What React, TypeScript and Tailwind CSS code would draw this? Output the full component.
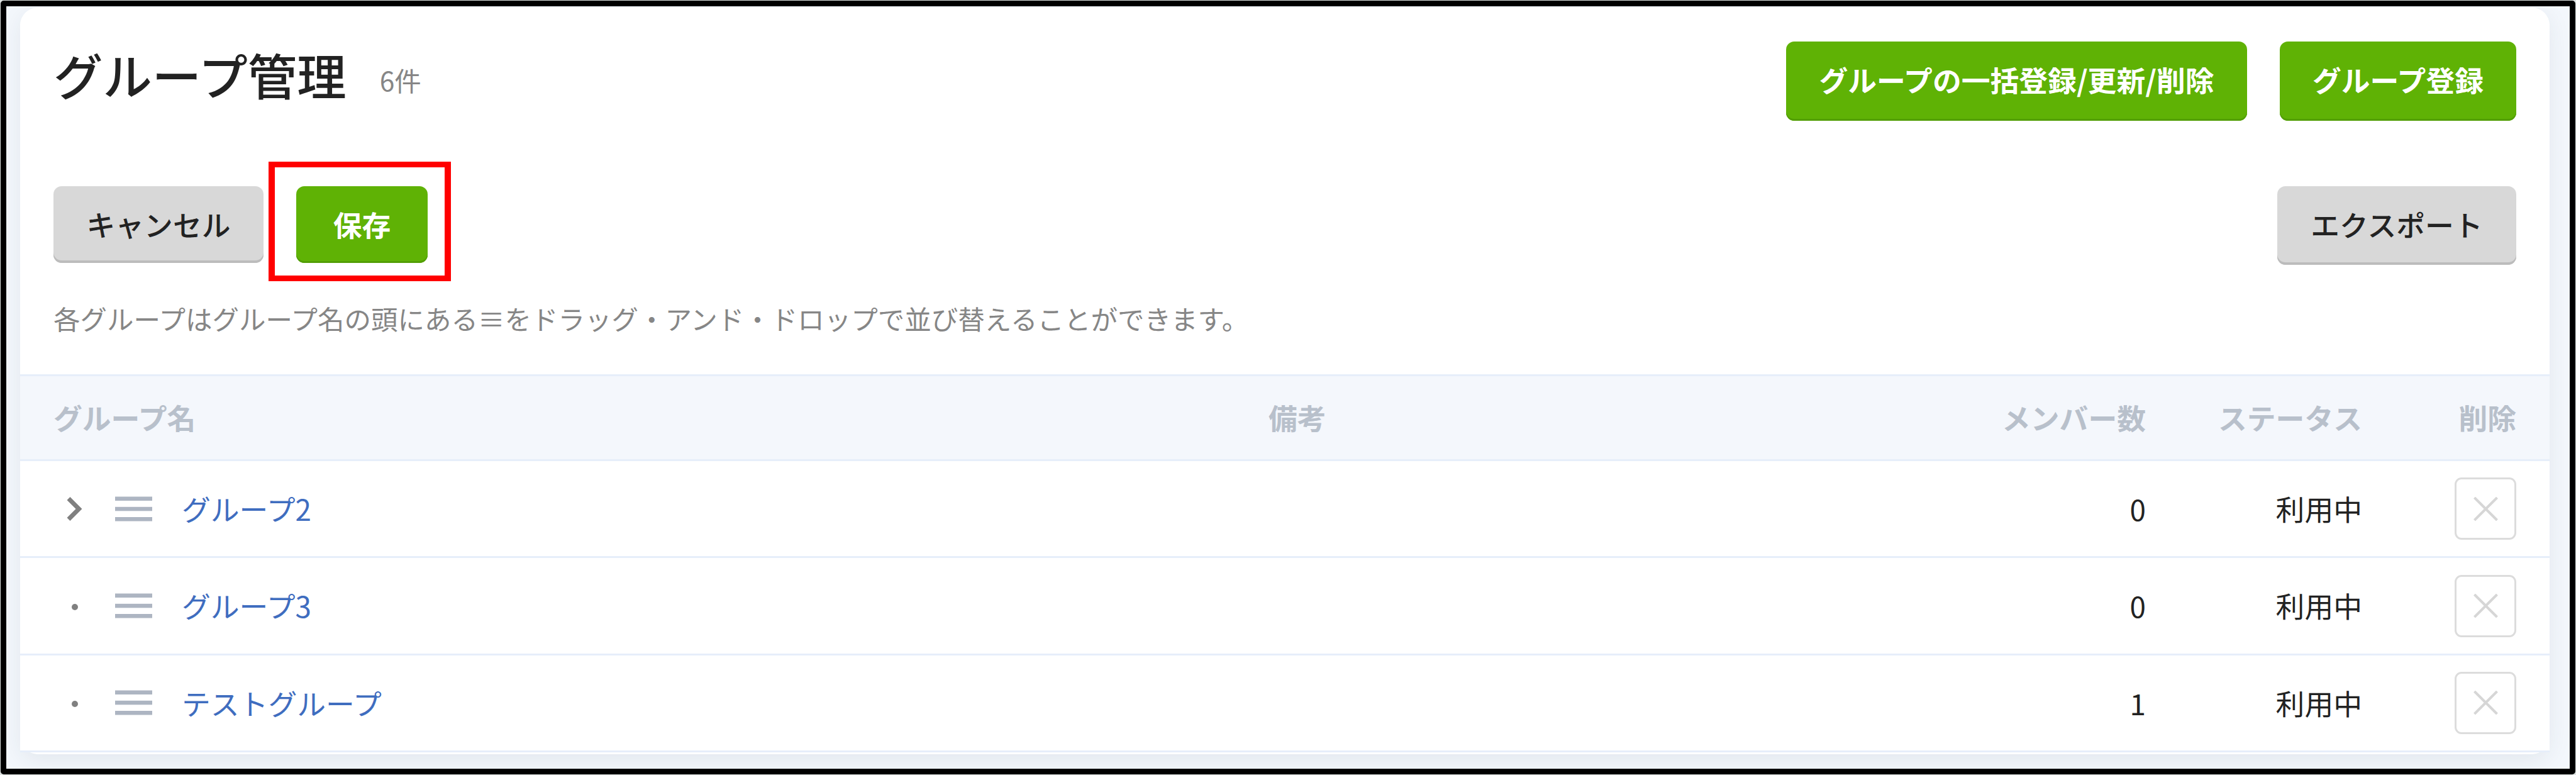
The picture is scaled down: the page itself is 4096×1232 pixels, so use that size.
import { clsx } from 'clsx'
import type { ReactNode } from 'react'

const groups = [
  { name: 'グループ2', members: 0, status: '利用中', hasChildren: true },
  { name: 'グループ3', members: 0, status: '利用中', hasChildren: false },
  { name: 'テストグループ', members: 1, status: '利用中', hasChildren: false },
]

const columns = 'grid grid-cols-[1932px_1101px_294px_344px_245px] items-center pl-[53px] pr-[53px]'

const ChevronIcon = () => (
  <svg width="25" height="40" viewBox="0 0 25 40" fill="none">
    <path d="M3 3.5L19.5 20L3 36.5" stroke="#808080" strokeWidth="7" />
  </svg>
)

const HandleIcon = () => (
  <svg width="59" height="40" viewBox="0 0 59 40" fill="#adb5c2">
    <rect width="59" height="6.5" y="0.5" />
    <rect width="59" height="6.5" y="16.8" />
    <rect width="59" height="6.5" y="33" />
  </svg>
)

const CrossIcon = () => (
  <svg width="39" height="38" viewBox="0 0 39 38" fill="none">
    <path d="M1.5 1L37.5 37M37.5 1L1.5 37" stroke="#d6d6d6" strokeWidth="4" />
  </svg>
)

function Button({ children, variant = 'primary', className }: { children: ReactNode; variant?: 'primary' | 'default'; className?: string }) {
  return (
    <button
      className={clsx(
        'flex items-center justify-center rounded-[13px] text-[45.8px] leading-none whitespace-nowrap',
        variant === 'primary' && 'bg-[#5fb205] font-bold text-white shadow-[inset_0_-3px_0_#529e05]',
        variant === 'default' && 'bg-[#d8d8d8] font-medium text-[#222] shadow-[inset_0_-4px_0_#bcbcbc]',
        className,
      )}
    >
      {children}
    </button>
  )
}

export default function App() {
  return (
    <div className="h-[1232px] w-[4096px] overflow-hidden bg-[#dfe3e2] p-px font-['Noto_Sans_CJK_JP',sans-serif] text-[#222]">
      <div className="h-[1230px] w-[4094px] overflow-hidden rounded-[5px] border-[9px] border-black bg-[#f3f7fc] pt-[2px] pr-[31px] pl-[22px]">
        <main className="h-[1187px] w-[4022px] rounded-[28px] bg-white pt-[54px] shadow-[0_10px_36px_rgba(40,50,70,0.08)]">
          <header className="flex h-[126px] pr-[53px] pl-[53px]">
            <h1 className="mt-[7px] text-[78.4px] leading-[90px] font-medium">グループ管理</h1>
            <span className="mt-[39px] ml-[53px] text-[42.5px] leading-[44px] text-[#868686]">6件</span>
            <div className="ml-auto flex gap-[52px]">
              <Button className="h-[126px] w-[733px] pb-[5px]">グループの一括登録/更新/削除</Button>
              <Button className="h-[126px] w-[376px] pb-[5px]">グループ登録</Button>
            </div>
          </header>

          <div className="mt-[104px] flex h-[125px] items-start px-[53px]">
            <Button variant="default" className="h-[122px] w-[334px]">キャンセル</Button>
            <div className="relative ml-[52px]">
              <Button className="h-[122px] w-[209px]">保存</Button>
              {/* Highlight around the save button */}
              <div className="pointer-events-none absolute -top-[39px] -left-[44px] h-[190px] w-[290px] border-x-[10px] border-y-[9px] border-[#ff0000]" />
            </div>
            <Button variant="default" className="ml-auto h-[125px] w-[380px] pb-[4px]">エクスポート</Button>
          </div>

          <p className="mt-[55px] h-[119px] px-[53px] text-[42.5px] leading-[60px] text-[#868686]">
            各グループはグループ名の頭にある≡をドラッグ・アンド・ドロップで並び替えることができます。
          </p>

          <section>
            <div className={clsx(columns, 'h-[138px] border-y-[3px] border-[#e6eefa] bg-[#f4f7fc] text-[45.8px] leading-none font-bold text-[#b8c0cb]')}>
              <span>グループ名</span>
              <span>備考</span>
              <span className="text-right">メンバー数</span>
              <span className="text-right">ステータス</span>
              <span className="text-right">削除</span>
            </div>
            {groups.map((group) => (
              <div key={group.name} className={clsx(columns, 'h-[154.4px] border-b-[3px] border-[#e6eefa] bg-white text-[45.8px] leading-none')}>
                <div className="flex items-center">
                  <div className="flex w-[67px] items-center justify-center">
                    {group.hasChildren ? <ChevronIcon /> : <i className="mt-1 size-[10px] rounded-full bg-[#808080]" />}
                  </div>
                  <div className="ml-[31px] w-[59px]"><HandleIcon /></div>
                  <a className="ml-[47px] text-[#3f6dbf]">{group.name}</a>
                </div>
                <span />
                <span className="text-right">{group.members}</span>
                <span className="text-right">{group.status}</span>
                <button className="flex h-[99px] w-[98px] items-center justify-center justify-self-end rounded-[11px] border-[3px] border-[#dcdcdc]">
                  <CrossIcon />
                </button>
              </div>
            ))}
          </section>
        </main>
      </div>
    </div>
  )
}
